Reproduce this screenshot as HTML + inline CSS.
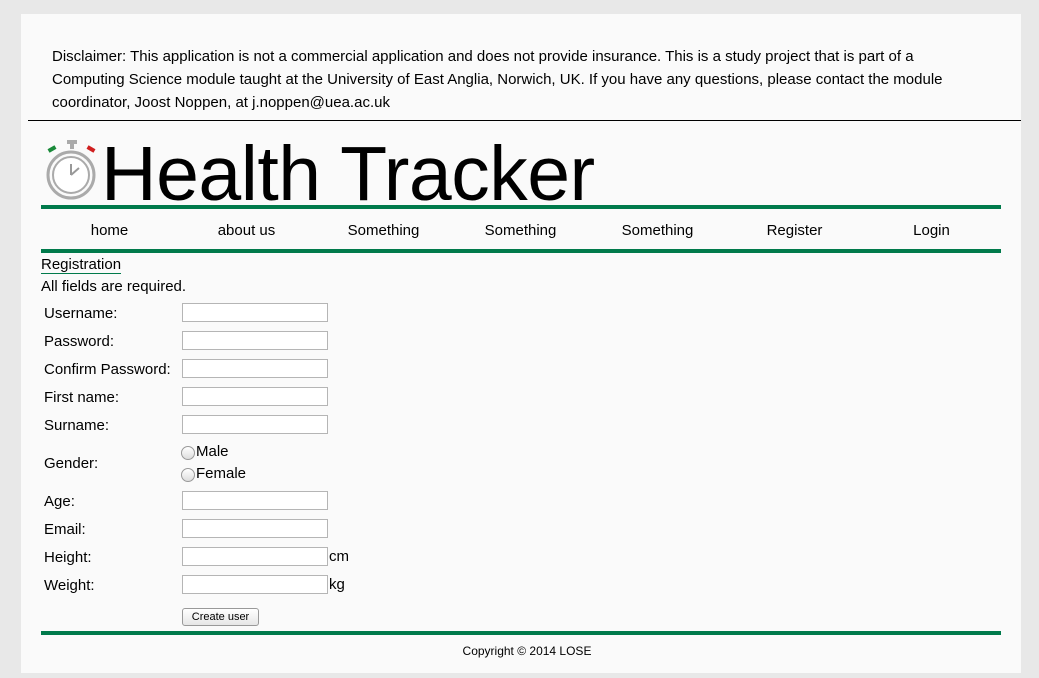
<!DOCTYPE html>
<html><head><style>
body{margin:0;background:#e8e8e8;font-family:"Liberation Sans",Arial,sans-serif;color:#000;width:1039px;height:678px;overflow:hidden;position:relative}
#c{position:absolute;left:21px;top:14px;width:1000px;height:659px;background:#fafafa}
.a{position:absolute;white-space:nowrap}
.disc{position:absolute;left:31px;top:31px;width:925px;font-size:15px;line-height:23px}
.hr{position:absolute;left:7px;top:106px;width:993px;height:1px;background:#000}
.g{position:absolute;left:20px;width:960px;height:4px;background:#007a4b}
.nav{position:absolute;top:208px;font-size:15px;width:137px;text-align:center}
.lbl{position:absolute;left:23px;font-size:15px}
.in{position:absolute;left:161px;width:144px;height:17px;border:1px solid #b5b5b5;background:#fff}
.rad{position:absolute;left:160px;width:12px;height:12px;border-radius:50%;border:1px solid #999;background:linear-gradient(#fff,#ddd)}
</style></head><body><div id="c">
<div class="disc">Disclaimer: This application is not a commercial application and does not provide insurance. This is a study project that is part of a Computing Science module taught at the University of East Anglia, Norwich, UK. If you have any questions, please contact the module coordinator, Joost Noppen, at j.noppen@uea.ac.uk</div>
<div class="hr"></div>
<svg class="a" style="left:23px;top:124px" width="56" height="62" viewBox="0 0 56 62">
<rect x="23" y="2" width="10" height="4" fill="#aaa"/><rect x="26" y="5" width="4" height="6" fill="#aaa"/>
<rect x="4" y="9" width="8" height="4" fill="#1a8a3a" transform="rotate(-30 8 11)"/>
<rect x="43" y="9" width="8" height="4" fill="#d02020" transform="rotate(30 47 11)"/>
<circle cx="27" cy="37" r="23" fill="none" stroke="#aaa" stroke-width="3"/>
<circle cx="27" cy="37" r="18" fill="#fff" stroke="#aaa" stroke-width="2"/>
<path d="M27 37 L27 26 M27 37 L35 30" stroke="#999" stroke-width="2" fill="none"/>
</svg>
<div class="a" style="left:80px;top:115px;font-size:77px;line-height:90px;letter-spacing:-0.5px">Health Tracker</div>
<div class="g" style="top:191px"></div>
<div class="nav" style="left:20px">home</div>
<div class="nav" style="left:157px">about us</div>
<div class="nav" style="left:294px">Something</div>
<div class="nav" style="left:431px">Something</div>
<div class="nav" style="left:568px">Something</div>
<div class="nav" style="left:705px">Register</div>
<div class="nav" style="left:842px">Login</div>
<div class="g" style="top:235px"></div>
<div class="a" style="left:20px;top:242px;font-size:15px;border-bottom:1px solid #007a4b;line-height:17px">Registration</div>
<div class="a" style="left:20px;top:264px;font-size:15px">All fields are required.</div>
<div class="lbl" style="top:291px">Username:</div><div class="in" style="top:289px"></div>
<div class="lbl" style="top:319px">Password:</div><div class="in" style="top:317px"></div>
<div class="lbl" style="top:347px">Confirm Password:</div><div class="in" style="top:345px"></div>
<div class="lbl" style="top:375px">First name:</div><div class="in" style="top:373px"></div>
<div class="lbl" style="top:403px">Surname:</div><div class="in" style="top:401px"></div>
<div class="lbl" style="top:441px">Gender:</div>
<div class="rad" style="top:432px"></div><div class="a" style="left:175px;top:429px;font-size:15px">Male</div>
<div class="rad" style="top:454px"></div><div class="a" style="left:175px;top:451px;font-size:15px">Female</div>
<div class="lbl" style="top:479px">Age:</div><div class="in" style="top:477px"></div>
<div class="lbl" style="top:507px">Email:</div><div class="in" style="top:505px"></div>
<div class="lbl" style="top:535px">Height:</div><div class="in" style="top:533px"></div><div class="a" style="left:308px;top:534px;font-size:15px">cm</div>
<div class="lbl" style="top:563px">Weight:</div><div class="in" style="top:561px"></div><div class="a" style="left:308px;top:562px;font-size:15px">kg</div>
<div class="a" style="left:161px;top:594px;width:75px;height:16px;border:1px solid #999;border-radius:3px;background:linear-gradient(#fff,#e6e6e6);font-size:11px;text-align:center;line-height:16px">Create user</div>
<div class="g" style="top:617px"></div>
<div class="a" style="left:6px;width:1000px;text-align:center;top:630px;font-size:12px">Copyright © 2014 LOSE</div>
</div></body></html>
